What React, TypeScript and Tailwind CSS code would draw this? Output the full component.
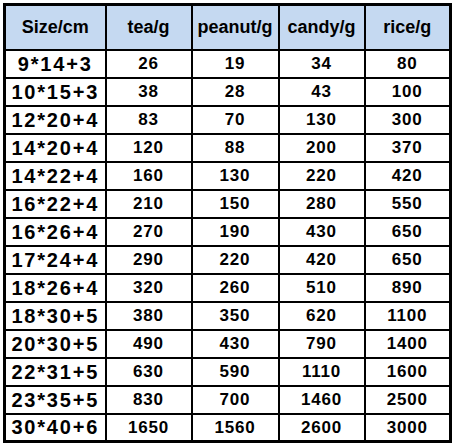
const headers = ["Size/cm", "tea/g", "peanut/g", "candy/g", "rice/g"];

const rows: [string, number, number, number, number][] = [
  ["9*14+3", 26, 19, 34, 80],
  ["10*15+3", 38, 28, 43, 100],
  ["12*20+4", 83, 70, 130, 300],
  ["14*20+4", 120, 88, 200, 370],
  ["14*22+4", 160, 130, 220, 420],
  ["16*22+4", 210, 150, 280, 550],
  ["16*26+4", 270, 190, 430, 650],
  ["17*24+4", 290, 220, 420, 650],
  ["18*26+4", 320, 260, 510, 890],
  ["18*30+5", 380, 350, 620, 1100],
  ["20*30+5", 490, 430, 790, 1400],
  ["22*31+5", 630, 590, 1110, 1600],
  ["23*35+5", 830, 700, 1460, 2500],
  ["30*40+6", 1650, 1560, 2600, 3000],
];

export default function App() {
  return (
    <div
      className="w-[452px] h-[444px] bg-white pl-[3px] pt-[3px] overflow-hidden"
      style={{ fontFamily: '"Liberation Sans", Arial, sans-serif' }}
    >
      <table className="w-[446px] table-fixed border-collapse border-[3px] border-black text-black font-bold">
        <colgroup>
          <col className="w-[101px]" />
          <col className="w-[86px]" />
          <col className="w-[87px]" />
          <col className="w-[86px]" />
          <col className="w-[86px]" />
        </colgroup>
        <thead>
          <tr className="h-[45px] bg-[#c5d9f1]">
            {headers.map((h) => (
              <th key={h} className="border-2 border-black p-0 text-[18px] text-center align-middle">
                {h}
              </th>
            ))}
          </tr>
        </thead>
        <tbody>
          {rows.map((r) => (
            <tr key={r[0]} className="h-[28px]">
              <td className="border-2 border-black p-0 text-center text-[20px] tracking-[1.8px] leading-none">
                {r[0]}
              </td>
              {r.slice(1).map((v, i) => (
                <td key={i} className="border-2 border-black p-0 text-center text-[17px] tracking-[0.8px] leading-none">
                  {v}
                </td>
              ))}
            </tr>
          ))}
        </tbody>
      </table>
    </div>
  );
}
